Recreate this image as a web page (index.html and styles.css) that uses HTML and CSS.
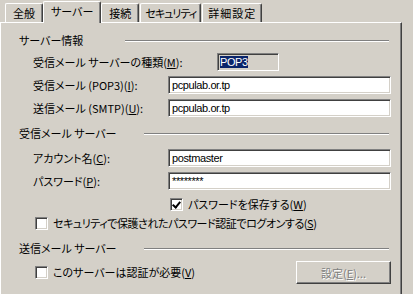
FILE: index.html
```html
<!DOCTYPE html>
<html lang="ja">
<head>
    <meta charset="UTF-8">
    <title>プロパティ</title>
    <link rel="stylesheet" href="styles.css">
</head>
<body>

    <div class="dialog">
        <div class="tabs">
            <div class="tab">全般</div>
            <div class="tab active">サーバー</div>
            <div class="tab">接続</div>
            <div class="tab tab-security">セキュリティ</div>
            <div class="tab tab-advanced">詳細設定</div>
        </div>

        <div class="panel">
            <div class="group-title first">
                <span>サーバー情報</span><i class="rule"></i>
            </div>
            <div class="fields">
                <label>受信メール サーバーの種類(<u>M</u>):</label>
                <div><span class="readonly"><span class="sel">POP3</span></span></div>

                <label>受信メール (POP3)(<u>I</u>):</label>
                <div class="edit">pcpulab.or.tp</div>

                <label>送信メール (SMTP)(<u>U</u>):</label>
                <div class="edit">pcpulab.or.tp</div>
            </div>

            <div class="group-title">
                <span>受信メール サーバー</span><i class="rule"></i>
            </div>
            <div class="fields account">
                <label>アカウント名(<u>C</u>):</label>
                <div class="edit">postmaster</div>

                <label>パスワード(<u>P</u>):</label>
                <div class="edit">********</div>
            </div>
            <div class="check save-pass">
                <span class="box checked"></span>パスワードを保存する(<u>W</u>)
            </div>
            <div class="check indent tight">
                <span class="box"></span>セキュリティで保護されたパスワード認証でログオンする(<u>S</u>)
            </div>

            <div class="group-title last">
                <span>送信メール サーバー</span><i class="rule"></i>
            </div>
            <div class="auth-row">
                <div class="check">
                    <span class="box"></span>このサーバーは認証が必要(<u>V</u>)
                </div>
                <button class="btn" disabled>設定(<u>E</u>)...</button>
            </div>
        </div>
    </div>

</body>
</html>
```

FILE: styles.css
```css
body {
    margin: 0;
    background-color: #d4d0c8;
    font-family: "Noto Sans CJK JP", sans-serif;
    font-size: 11px;
    line-height: 14px;
    font-feature-settings: "palt";
    color: #000;
}

u {
    text-decoration: underline;
    text-underline-offset: 1px;
}

.dialog {
    width: 402px;
}

/* タブ */
.tabs {
    display: flex;
    align-items: flex-end;
    gap: 1px;
    height: 22px;
    padding-left: 5px;
}

.tab {
    height: 18px;
    line-height: 18px;
    padding: 0 7px;
    border-top: 1px solid #fff;
    border-left: 1px solid #fff;
    border-right: 1px solid #404040;
    box-shadow: inset -1px 0 #808080;
    border-radius: 2px 2px 0 0;
    white-space: nowrap;
}

    .tab.active {
        position: relative;
        z-index: 1;
        height: 21px;
        line-height: 19px;
        margin: 0 -1px -1px;
        background: #d4d0c8;
    }

    .tab.tab-security {
        padding: 0 4px;
        letter-spacing: -1px;
    }

    .tab.tab-advanced {
        padding: 0 5px;
        letter-spacing: 1px;
    }

.panel {
    box-sizing: border-box;
    height: 280px;
    padding: 0 10px 0 18px;
    border-top: 1px solid #fff;
    border-left: 1px solid #fff;
    border-right: 1px solid #404040;
    box-shadow: inset -1px 0 #808080;
}

/* グループ見出し */
.group-title {
    display: flex;
    align-items: center;
    height: 14px;
    margin-top: 9px;
}

    .group-title.first {
        margin-top: 10px;
    }

    .group-title.last {
        margin-top: 11px;
    }

.rule {
    flex: 1;
    height: 0;
    margin: 1px 2px 0 27px;
    border-top: 1px solid #808080;
    border-bottom: 1px solid #fff;
}

.group-title.first .rule {
    margin-left: 42px;
}

/* 入力欄 */
.fields {
    display: grid;
    grid-template-columns: 135px 1fr;
    grid-auto-rows: 18px;
    row-gap: 5px;
    align-items: center;
    margin-top: 6px;
    padding-left: 14px;
}

    .fields.account {
        margin-top: 9px;
    }

    .fields label {
        white-space: nowrap;
    }

    .fields + .check {
        margin-top: 8px;
    }

.edit,
.readonly {
    box-sizing: border-box;
    height: 18px;
    padding: 0 3px;
    line-height: 16px;
    background: #fff;
    border: 1px solid;
    border-color: #808080 #fff #fff #808080;
    box-shadow: inset 1px 1px #404040, inset -1px -1px #d4d0c8;
    font-family: "Liberation Sans", "Noto Sans CJK JP", sans-serif;
    font-size: 11px;
    letter-spacing: -0.4px;
}

.readonly {
    display: block;
    width: 62px;
    margin-left: 49px;
    padding: 0 2px;
    background: #d4d0c8;
}

.sel {
    background: #0a246a;
    color: #fff;
}

/* チェックボックス */
.check {
    display: flex;
    align-items: center;
    height: 13px;
    line-height: 13px;
    white-space: nowrap;
}

    .check.save-pass {
        padding-left: 151px;
    }

    .check.indent {
        margin-top: 6px;
        padding-left: 16px;
    }

    .check.tight {
        letter-spacing: -0.45px;
    }

.box {
    box-sizing: border-box;
    position: relative;
    flex: none;
    width: 13px;
    height: 13px;
    margin-right: 5px;
    background: #fff;
    border: 1px solid;
    border-color: #808080 #fff #fff #808080;
    box-shadow: inset 1px 1px #404040, inset -1px -1px #d4d0c8;
}

    .box.checked::after {
        content: "";
        position: absolute;
        left: 3px;
        top: 1px;
        width: 3px;
        height: 6px;
        border: solid #000;
        border-width: 0 2px 2px 0;
        transform: rotate(40deg);
    }

.auth-row {
    display: flex;
    align-items: center;
    justify-content: space-between;
    margin-top: 6px;
    padding-left: 16px;
}

.btn {
    box-sizing: border-box;
    width: 95px;
    height: 23px;
    padding: 0;
    background: #d4d0c8;
    border: 1px solid;
    border-color: #fff #404040 #404040 #fff;
    box-shadow: inset -1px -1px #808080;
    font-family: "Noto Sans CJK JP", sans-serif;
    font-size: 11px;
    font-feature-settings: "palt";
    color: #808080;
    text-shadow: 1px 1px #fff;
}
```
